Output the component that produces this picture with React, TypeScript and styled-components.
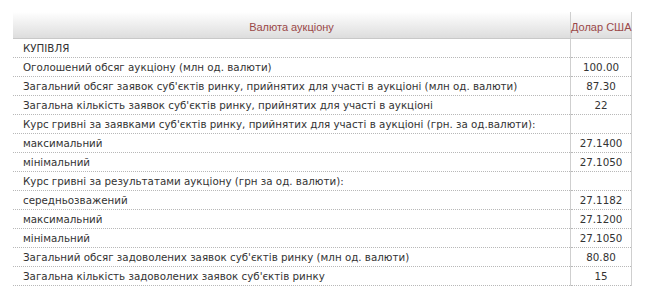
import React from 'react';
import styled, { createGlobalStyle } from 'styled-components';

const GlobalStyle = createGlobalStyle`
  html, body {
    margin: 0;
    padding: 0;
    background: #ffffff;
  }
`;

const Page = styled.div`
  padding: 12px 18px 0 13px;
  width: 650px;
  box-sizing: border-box;
`;

const Table = styled.table`
  width: 619px;
  border-collapse: collapse;
  table-layout: fixed;
  font-family: "DejaVu Sans", Verdana, sans-serif;
  font-size: 10.3px;
  color: #333333;
`;

const HeadCell = styled.th<{ $narrow?: boolean }>`
  height: 26px;
  padding: 5px 0 0;
  box-sizing: border-box;
  background: linear-gradient(to bottom, #ffffff 0%, #f1f1f1 40%, #dddddd 100%);
  border-bottom: 1px solid #c8c8c8;
  border-left: ${p => (p.$narrow ? '1px solid #cfcfcf' : 'none')};
  border-right: ${p => (p.$narrow ? '1px solid #cfcfcf' : 'none')};
  font-family: "Liberation Sans", Arial, sans-serif;
  font-weight: normal;
  font-size: 11px;
  color: #9a4848;
  text-align: center;
  white-space: nowrap;
  width: ${p => (p.$narrow ? '61px' : 'auto')};
`;

const Row = styled.tr`
  border-bottom: 1px dotted #b8b8b8;
`;

const LabelCell = styled.td`
  height: 18px;
  padding: 0 0 0 10px;
  white-space: nowrap;
`;

const ValueCell = styled.td`
  height: 18px;
  padding: 0;
  text-align: center;
  border-left: 1px solid #cfcfcf;
  border-right: 1px solid #cfcfcf;
`;

type Item = { label: string; value?: string };

const rows: Item[] = [
  { label: 'КУПІВЛЯ' },
  { label: 'Оголошений обсяг аукціону (млн од. валюти)', value: '100.00' },
  { label: 'Загальний обсяг заявок суб\'єктів ринку, прийнятих для участі в аукціоні (млн од. валюти)', value: '87.30' },
  { label: 'Загальна кількість заявок суб\'єктів ринку, прийнятих для участі в аукціоні', value: '22' },
  { label: 'Курс гривні за заявками суб\'єктів ринку, прийнятих для участі в аукціоні (грн. за од.валюти):' },
  { label: 'максимальний', value: '27.1400' },
  { label: 'мінімальний', value: '27.1050' },
  { label: 'Курс гривні за результатами аукціону (грн за од. валюти):' },
  { label: 'середньозважений', value: '27.1182' },
  { label: 'максимальний', value: '27.1200' },
  { label: 'мінімальний', value: '27.1050' },
  { label: 'Загальний обсяг задоволених заявок суб\'єктів ринку (млн од. валюти)', value: '80.80' },
  { label: 'Загальна кількість задоволених заявок суб\'єктів ринку', value: '15' },
];

const App: React.FC = () => {
  return (
    <>
      <GlobalStyle />
      <Page>
        <Table>
          <thead>
            <tr>
              <HeadCell>Валюта аукціону</HeadCell>
              <HeadCell $narrow>Долар США</HeadCell>
            </tr>
          </thead>
          <tbody>
            {rows.map((r, i) => (
              <Row key={i}>
                <LabelCell>{r.label}</LabelCell>
                <ValueCell>{r.value ?? ''}</ValueCell>
              </Row>
            ))}
          </tbody>
        </Table>
      </Page>
    </>
  );
};

export default App;
